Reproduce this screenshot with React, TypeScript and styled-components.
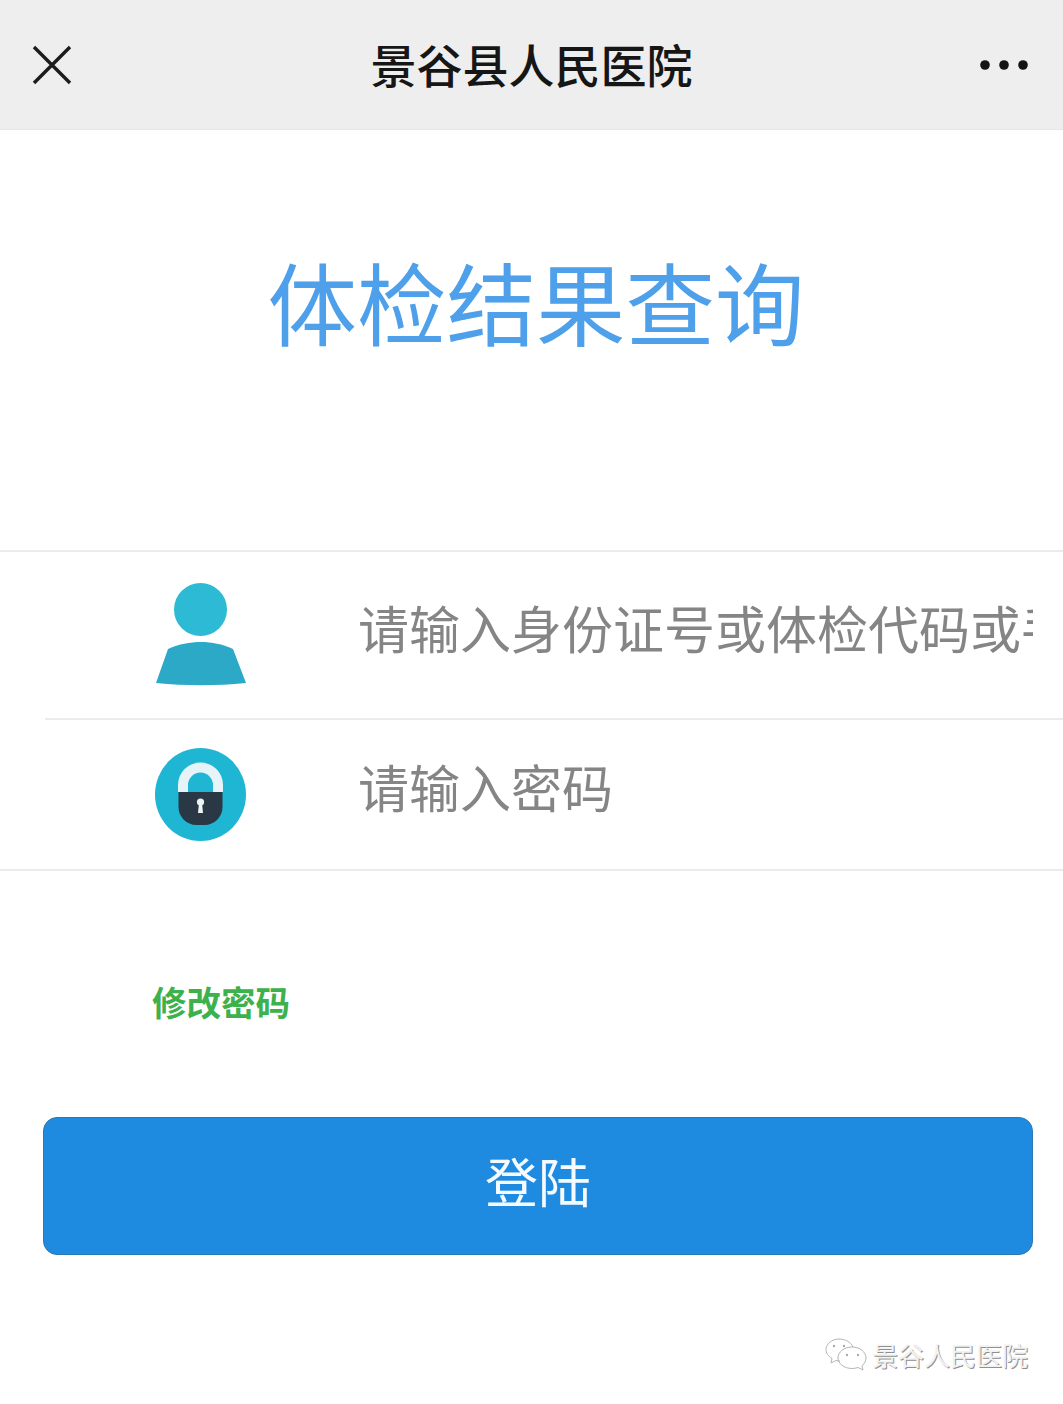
import React from "react";
import styled, { createGlobalStyle } from "styled-components";

const Global = createGlobalStyle`
  html, body { margin: 0; padding: 0; background: #fff; }
  body { font-family: "Noto Sans CJK SC", "Noto Sans", sans-serif; }
  input::placeholder { color: #858585; opacity: 1; }
`;

const Page = styled.div`
  width: 1063px;
  height: 1404px;
  display: flex;
  flex-direction: column;
  overflow: hidden;
  background: #fff;
`;

const NavBar = styled.header`
  height: 130px;
  flex: none;
  background: #eeeeee;
  display: grid;
  grid-template-columns: 200px 1fr 200px;
  align-items: center;
  padding: 0 34px 0 32px;
  box-sizing: border-box;
  box-shadow: inset 0 -1px 0 #e6e6e6;
`;

const NavTitle = styled.h1`
  margin: 0;
  font-size: 46px;
  font-weight: 500;
  color: #161616;
  text-align: center;
  line-height: 1;
  transform: translate(1px, -2px);
`;

const NavRight = styled.div`
  display: flex;
  justify-content: flex-end;
`;

const Heading = styled.h2`
  margin: 0;
  height: 420px;
  flex: none;
  box-sizing: border-box;
  padding: 118px 0 0 9px;
  text-align: center;
  font-size: 89.5px;
  line-height: 104px;
  font-weight: 400;
  color: #4ea0ea;
`;

const Form = styled.div`
  border-top: 2px solid #ebebeb;
  border-bottom: 2px solid #ebebeb;
  display: flex;
  flex-direction: column;
`;

const Row = styled.label<{ $h: number; $divider?: boolean }>`
  height: ${(p) => p.$h}px;
  margin-left: 45px;
  display: flex;
  align-items: center;
  box-sizing: border-box;
  ${(p) => (p.$divider ? "border-bottom: 2px solid #ebebeb;" : "")}
`;

const IconCell = styled.div`
  width: 313px;
  flex: none;
  padding-left: 110px;
  box-sizing: border-box;
  display: flex;
`;

const Field = styled.input`
  width: 675px;
  flex: none;
  border: 0;
  outline: 0;
  padding: 0 0 17px;
  box-sizing: border-box;
  background: transparent;
  font-family: inherit;
  font-size: 51px;
  line-height: 70px;
  height: 87px;
  color: #858585;
`;

const Link = styled.a`
  display: block;
  margin: 105px 0 0 152px;
  font-size: 34.5px;
  line-height: 50px;
  font-weight: 700;
  color: #3cb14c;
  text-decoration: none;
`;

const Submit = styled.button`
  margin: 91px 30px 0 43px;
  height: 138px;
  flex: none;
  box-sizing: border-box;
  border: 1px solid #2a78b4;
  border-radius: 14px;
  background: #1f8be0;
  color: #f4faff;
  font-family: inherit;
  font-size: 53px;
  font-weight: 400;
  line-height: 1;
  padding: 0 0 12px;
`;

const Footer = styled.div`
  margin-top: 82px;
  padding-right: 35px;
  display: flex;
  justify-content: flex-end;
  align-items: center;
  gap: 5px;
`;

const Watermark = styled.span`
  font-size: 26px;
  line-height: 36px;
  color: #f2f2f2;
  text-shadow: 1px 1px 0 #8f8f8f;
`;

const CloseIcon = () => (
  <svg width="40" height="40" viewBox="0 0 40 40" fill="none" stroke="#1c1c1c" strokeWidth="3.4">
    <path d="M2 2 38 38M38 2 2 38" />
  </svg>
);

const MoreIcon = () => (
  <svg width="50" height="14" viewBox="0 0 50 14" fill="#141414">
    <circle cx="6" cy="7" r="4.800" />
    <circle cx="25" cy="7" r="4.800" />
    <circle cx="44" cy="7" r="4.800" />
  </svg>
);

const UserIcon = () => (
  <svg width="92" height="108" viewBox="0 0 92 108">
    <circle cx="45.5" cy="28.500" r="26.5" fill="#2cbad4" />
    <path d="M13 68C24 63 35 61 46 61s21 2 32 7l13 34c-30 3-60 3-90 0z" fill="#2ba9c6" />
  </svg>
);

const LockIcon = () => (
  <svg width="92" height="94" viewBox="0 0 92 94">
    <ellipse cx="45.5" cy="46.500" rx="45.5" ry="46.5" fill="#1fb6d3" />
    <path d="M28 44V37a17.500 17.500 0 0 1 35 0v7" fill="none" stroke="#e6f3f8" strokeWidth="10" />
    <path d="M23.500 44h44v15c0 10-8 18-18 18h-8c-10 0-18-8-18-18z" fill="#2a3744" />
    <circle cx="45.5" cy="54" r="3.600" fill="#eef4f6" />
    <path d="M44 55h3l1 10h-5z" fill="#eef4f6" />
  </svg>
);

const WeChatIcon = () => (
  <svg width="42" height="34" viewBox="0 0 42 34" fill="none" stroke="#b5b5b5" strokeWidth="1">
    <path d="M15 23c-1 0-3 0-4-.5L6 25l1-4.500C3 18 1 15 1 11.500 1 6 7 1 14 1c6 0 12 3 14 8" />
    <path d="M27 9c8 0 14 5 14 11 0 3-2 6-4 8l1 4-5-2.500c-2 .5-4 1-6 1-8 0-14-5-14-10.500C13 14 19 9 27 9z" />
    <circle cx="9" cy="8" r="1.200" fill="#aaa" stroke="none" />
    <circle cx="19" cy="8" r="1.200" fill="#aaa" stroke="none" />
    <circle cx="22" cy="17" r="1.200" fill="#aaa" stroke="none" />
    <circle cx="33" cy="17" r="1.200" fill="#aaa" stroke="none" />
  </svg>
);

export default function App() {
  return (
    <Page>
      <Global />
      <NavBar>
        <CloseIcon />
        <NavTitle>景谷县人民医院</NavTitle>
        <NavRight>
          <MoreIcon />
        </NavRight>
      </NavBar>
      <Heading>体检结果查询</Heading>
      <Form>
        <Row $h={168} $divider>
          <IconCell>
            <UserIcon />
          </IconCell>
          <Field placeholder="请输入身份证号或体检代码或手机号" />
        </Row>
        <Row $h={149}>
          <IconCell>
            <LockIcon />
          </IconCell>
          <Field type="text" placeholder="请输入密码" />
        </Row>
      </Form>
      <Link>修改密码</Link>
      <Submit>登陆</Submit>
      <Footer>
        <WeChatIcon />
        <Watermark>景谷人民医院</Watermark>
      </Footer>
    </Page>
  );
}
